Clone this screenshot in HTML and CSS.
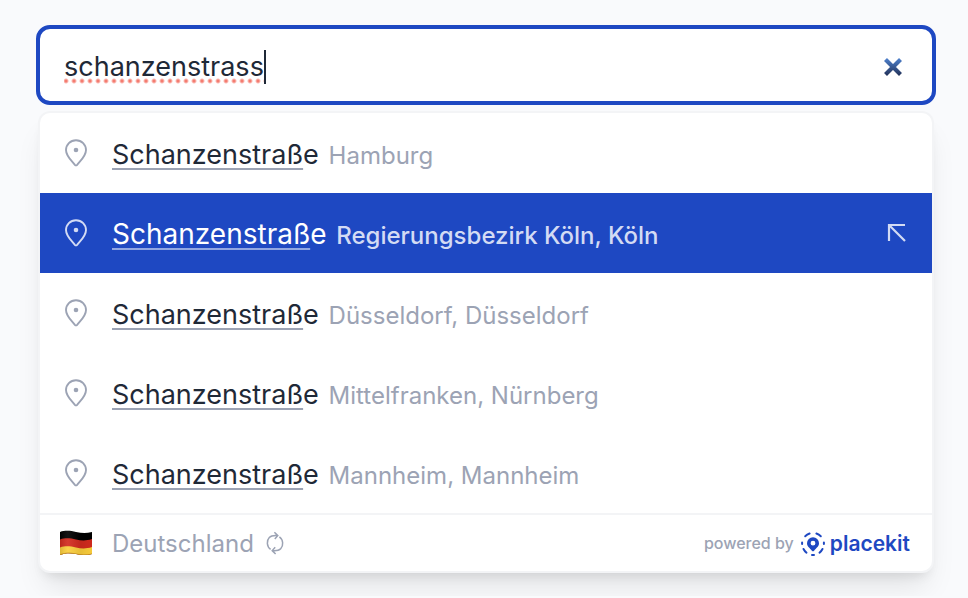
FILE: index.html
```html
<!DOCTYPE html>
<html lang="de">
<head>
<meta charset="utf-8">
<meta name="viewport" content="width=device-width, initial-scale=1">
<title>Adresssuche</title>
<link rel="stylesheet" href="styles.css">
</head>
<body>
<svg class="sprite" aria-hidden="true">
  <symbol id="pin" viewBox="0 0 24 28">
    <path d="M12 1.2C6.300 1.200 2 5.500 2 11.100c0 6.200 5.200 10.200 8.900 14.700q1.100 1.200 2.200 0C16.800 21.300 22 17.300 22 11.100 22 5.500 17.700 1.200 12 1.200z" fill="none" stroke="currentColor" stroke-width="1.900"/>
    <circle cx="12" cy="11" r="2.300" fill="currentColor"/>
  </symbol>
</svg>
<main class="search">
  <div class="field">
    <label class="field-text">
      <input class="field-input" type="text" value="schanzenstrass" aria-label="Adresse" autocomplete="off">
    </label>
    <button class="clear" type="button" aria-label="Eingabe löschen">
      <svg viewBox="0 0 20 20" width="20" height="20">
        <defs><linearGradient id="steel" gradientUnits="userSpaceOnUse" x1="0" y1="1" x2="0" y2="19"><stop offset="0" stop-color="#4f82cf"/><stop offset="1" stop-color="#213056"/></linearGradient></defs>
        <path d="M2.500 2.500l15 15M17.500 2.500l-15 15" stroke="url(#steel)" stroke-width="4.200"/>
      </svg>
    </button>
  </div>
  <div class="panel">
    <ul class="results">
      <li><button class="result" type="button"><svg class="pin"><use href="#pin"/></svg><span class="label"><span class="name"><mark>Schanzenstraß</mark>e</span> <span class="place">Hamburg</span></span></button></li>
      <li><button class="result active" type="button"><svg class="pin"><use href="#pin"/></svg><span class="label"><span class="name"><mark>Schanzenstraß</mark>e</span> <span class="place">Regierungsbezirk Köln, Köln</span></span><svg class="arrow" viewBox="0 0 20 20"><path d="M2 18V2h16M2 2l16 16" fill="none" stroke="currentColor" stroke-width="2.200"/></svg></button></li>
      <li><button class="result" type="button"><svg class="pin"><use href="#pin"/></svg><span class="label"><span class="name"><mark>Schanzenstraß</mark>e</span> <span class="place">Düsseldorf, Düsseldorf</span></span></button></li>
      <li><button class="result" type="button"><svg class="pin"><use href="#pin"/></svg><span class="label"><span class="name"><mark>Schanzenstraß</mark>e</span> <span class="place">Mittelfranken, Nürnberg</span></span></button></li>
      <li><button class="result" type="button"><svg class="pin"><use href="#pin"/></svg><span class="label"><span class="name"><mark>Schanzenstraß</mark>e</span> <span class="place">Mannheim, Mannheim</span></span></button></li>
    </ul>
    <footer class="footer">
      <button class="country" type="button">
        <svg class="flag" viewBox="0 0 32 26" aria-hidden="true">
          <defs>
            <clipPath id="wave"><path d="M0 2C6 0 11 1 16 2s10 1.500 16 0v22c-6 1.700-11 1-16 0s-10-1.500-16 1z"/></clipPath>
            <linearGradient id="fold"><stop offset="0" stop-color="#000" stop-opacity=".12"/><stop offset=".25" stop-color="#fff" stop-opacity=".08"/><stop offset=".65" stop-color="#000" stop-opacity=".08"/><stop offset="1" stop-color="#000" stop-opacity=".02"/></linearGradient>
          </defs>
          <g clip-path="url(#wave)">
            <path d="M0 0h32v26H0z" fill="#000"/>
            <path d="M0 9.500c6-2 11-1 16 0s10 1.500 16-.5v17H0z" fill="#d22a1e"/>
            <path d="M0 17.500c6-2 11-1 16 0s10 1.500 16-.5v9H0z" fill="#fbce3c"/>
            <path d="M0 0h32v26H0z" fill="url(#fold)"/>
            <path d="M0 24.800c6-2.300 11-1.800 16-.8s10 1.700 16 0" fill="none" stroke="#b98c20" stroke-width="1"/>
          </g>
        </svg>
        <span class="country-name">Deutschland</span>
        <svg class="switch" viewBox="0 0 18 24" aria-hidden="true">
          <g fill="none" stroke="currentColor" stroke-width="1.500">
            <path d="M4.600 18.300C0.600 15.500 0.400 9.500 3.300 6.500 5 4.700 7.500 4.300 11.500 4.600M8.400 1.200l3.400 3.400-3 3.400"/>
            <path d="M13.400 5.900C17.400 8.700 17.600 14.700 14.700 17.700 13 19.500 10.500 19.900 6.500 19.600M9.600 23l-3.400-3.400 3-3.400"/>
          </g>
        </svg>
      </button>
      <a class="credit" href="#">
        <span class="powered">powered by</span>
        <svg class="logo" viewBox="0 0 24 24" aria-hidden="true">
          <g fill="none" stroke="currentColor" stroke-width="2" stroke-linecap="round">
            <path d="M4.200 4.200Q6 2.500 8.600 1.500M15.400 1.500Q18 2.500 19.800 4.200M1.100 10.500v1.600M22.900 10.500v1.600M2.500 17Q3.500 19 5.500 20.700M21.500 17Q20.500 19 18.500 20.700M11 23h2"/>
          </g>
          <path fill="currentColor" fill-rule="evenodd" d="M12 5.200a6 6 0 0 0-6 6c0 3.500 3 4.800 4.900 7.500q1.100 1.200 2.200 0C15 16 18 14.700 18 11.200a6 6 0 0 0-6-6zm0 3.600a2.400 2.400 0 1 1 0 4.800 2.400 2.400 0 0 1 0-4.800z"/>
        </svg>
        <span class="brand">placekit</span>
      </a>
    </footer>
  </div>
</main>
</body>
</html>
```
FILE: styles.css
```css
* { box-sizing: border-box; }

body {
  margin: 0;
  background: #f9fafc;
  color: #1f2937;
  font-family: Inter, "Liberation Sans", sans-serif;
}

button {
  border: 0;
  padding: 0;
  background: none;
  color: inherit;
  font: inherit;
  text-align: left;
  cursor: pointer;
}

svg { flex: none; }

.sprite { position: absolute; width: 0; height: 0; }

.search { padding: 25px 32px 25px 36px; }

.field {
  display: flex;
  align-items: center;
  height: 80px;
  padding: 4px 29px 0 24px;
  border: 4px solid #1e48c2;
  border-radius: 14px;
  background: #fff;
}

.field-text {
  flex: 1;
  display: flex;
  cursor: text;
}

/* The input hugs its value, so its right border reads as the caret. */
.field-input {
  field-sizing: content;
  height: 34px;
  padding: 0;
  border: 0;
  border-right: 2px solid #1f2937;
  outline: 0;
  background: radial-gradient(circle, #f47c70 1px, rgb(244 124 112 / 0%) 3px) -2px 100% / 8px 6px repeat-x;
  color: inherit;
  caret-color: transparent;
  font: 400 27px/34px Inter, "Liberation Sans", sans-serif;
}

.clear { display: flex; }

.panel {
  margin: 8px 4px 0;
  border-radius: 10px;
  background: #fff;
  box-shadow:
    0 0 0 2px #f3f4f6,
    0 20px 30px -6px rgb(0 0 0 / 10%),
    0 8px 12px -4px rgb(0 0 0 / 10%);
}

.results {
  margin: 0;
  padding: 0;
  list-style: none;
}

.result {
  display: flex;
  align-items: center;
  width: 100%;
  height: 80px;
  padding: 0 25px 0 24px;
}

.pin {
  width: 24px;
  height: 28px;
  margin-right: 24px;
  color: #9ca3b4;
}

.label {
  flex: 1;
  padding-top: 4px;
  font-size: 24px;
  line-height: 36px;
  white-space: nowrap;
}

.name { font-size: 27px; }

.name mark {
  background: none;
  color: inherit;
  text-decoration: underline 2px #9ca3b4;
  text-underline-offset: 4px;
  text-decoration-skip-ink: none;
}

.place {
  margin-left: 3px;
  color: #9ca3b4;
}

.active {
  background: #1e48c2;
  color: #fff;
}

.active .name { font-size: 28px; }
.active .place { font-weight: 500; }
.active .name mark { text-decoration-color: #92a7e2; }
.active .pin,
.active .place,
.active .arrow { color: #d3dbf4; }

.arrow { width: 20px; height: 20px; }

.footer {
  display: flex;
  align-items: center;
  justify-content: space-between;
  height: 58px;
  padding: 0 22px 0 20px;
  border-top: 2px solid #f3f4f6;
}

.country {
  display: flex;
  align-items: center;
  color: #9ca3b4;
}

.flag { width: 32px; height: 26px; }

.country-name {
  margin: 0 12px 0 20px;
  font-size: 24px;
}

.switch { width: 18px; height: 24px; }

.credit {
  display: flex;
  align-items: center;
  color: #1e48c2;
  text-decoration: none;
}

.powered {
  color: #9ca3b4;
  font-size: 16px;
  font-weight: 500;
}

.logo {
  width: 24px;
  height: 24px;
  margin: 2px 5px 0 7px;
}

.brand {
  font-size: 21px;
  font-weight: 600;
}
```
